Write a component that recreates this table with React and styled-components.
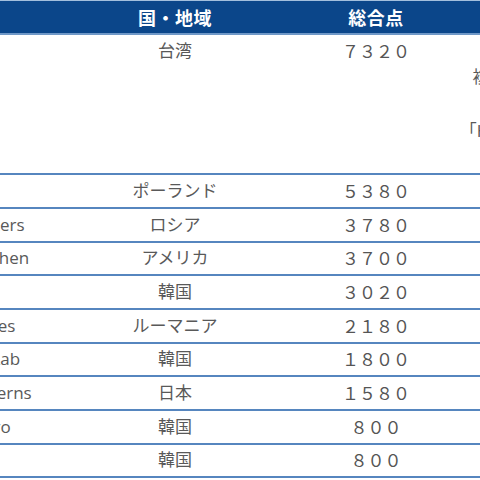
import React from "react";
import styled, { createGlobalStyle } from "styled-components";

const GlobalStyle = createGlobalStyle`
  html, body {
    margin: 0;
    padding: 0;
    background: #ffffff;
    overflow: hidden;
  }
  body {
    font-family: "Open Sans", "Noto Sans CJK JP", sans-serif;
  }
`;

const Page = styled.div`
  width: 480px;
  height: 480px;
  overflow: hidden;
`;

const Table = styled.table`
  border-collapse: collapse;
  table-layout: fixed;
  width: 770px;
  margin-left: -98px;
`;

const HeadCell = styled.th`
  width: ${(p) => p.$w}px;
  height: 32px;
  padding: 0;
  background: #0b468a;
  border-top: 1px solid #a3bfdd;
  border-bottom: 2px solid #6f98c7;
  color: #ffffff;
  font-size: 18px;
  font-weight: bold;
  text-align: center;
  vertical-align: middle;
  letter-spacing: 0.5px;
`;

const Row = styled.tr`
  border-bottom: 2px solid #5686bf;
`;

const Cell = styled.td`
  padding: 2.5px 8px;
  line-height: 26.67px;
  font-size: 17px;
  color: #595959;
  text-align: ${(p) => p.$align || "center"};
  vertical-align: ${(p) => (p.$top ? "top" : "middle")};
  white-space: nowrap;
  overflow: hidden;
`;

const Score = styled(Cell)`
  color: #555555;
  font-family: "Noto Sans CJK JP", sans-serif;
`;

const Note = styled(Cell)`
  padding-left: 3px;
  padding-right: 13px;
`;

const toWide = (n) =>
  String(n).replace(/[0-9]/g, (d) => String.fromCharCode(d.charCodeAt(0) + 0xfee0));

const teams = [
  { name: "p4", region: "ポーランド", score: 5380 },
  { name: "Bushwhackers", region: "ロシア", score: 3780 },
  { name: "Hacker Kitchen", region: "アメリカ", score: 3700 },
  { name: "Cykor", region: "韓国", score: 3020 },
  { name: "PwnThyBytes", region: "ルーマニア", score: 2180 },
  { name: "Seoul CTF Lab", region: "韓国", score: 1800 },
  { name: "TokyoWesterns", region: "日本", score: 1580 },
  { name: "Korean Hero", region: "韓国", score: 800 },
  { name: "LeaveCat", region: "韓国", score: 800 },
];

export default function App() {
  return (
    <Page>
      <GlobalStyle />
      <Table>
        <thead>
          <tr>
            <HeadCell $w={148}>名前</HeadCell>
            <HeadCell $w={250}>国・地域</HeadCell>
            <HeadCell $w={152}>総合点</HeadCell>
            <HeadCell $w={220}>備考</HeadCell>
          </tr>
        </thead>
        <tbody>
          <Row>
            <Cell $align="left" $top>
              217
            </Cell>
            <Cell $top>台湾</Cell>
            <Score $top>{toWide(7320)}</Score>
            <Note $top>
              台湾の合同チーム
              <br />
              複数チームによる混成
              <br />
              出場した
              <br />
              「HITCON」と「217」の
              <br />
              合同チーム
            </Note>
          </Row>
          {teams.map((t) => (
            <Row key={t.name}>
              <Cell $align="left">{t.name}</Cell>
              <Cell>{t.region}</Cell>
              <Score>{toWide(t.score)}</Score>
              <Note />
            </Row>
          ))}
        </tbody>
      </Table>
    </Page>
  );
}
